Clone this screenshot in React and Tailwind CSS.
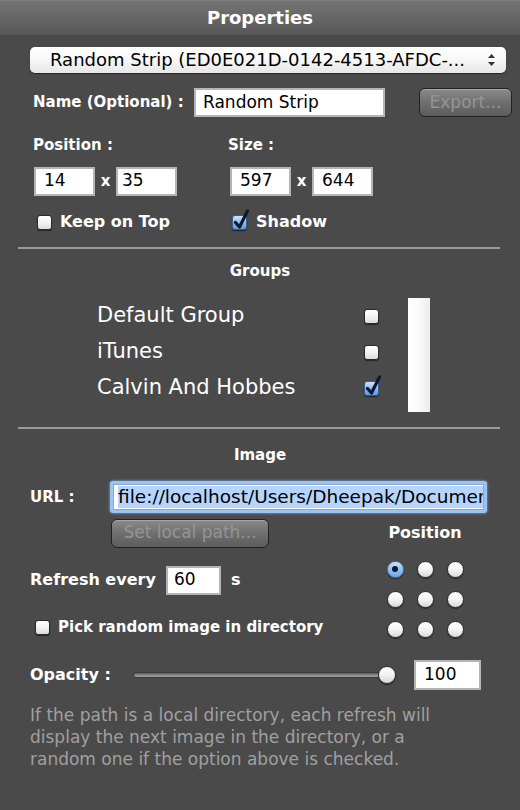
import React from "react";

const F = { fontFamily: '"DejaVu Sans", "Liberation Sans", sans-serif' };

function Check({ checked }) {
  if (checked) {
    return (
      <span className="relative inline-block w-[15px] h-[15px]">
        <span className="absolute inset-0 rounded-[3px] bg-gradient-to-b from-[#cfe3fb] via-[#8fbcf0] to-[#5d9ae0] shadow-[0_1px_1px_rgba(0,0,0,0.6)] border border-[#3a5f8f]" />
        <svg className="absolute left-[1px] top-[-6px]" width="17" height="21" viewBox="0 0 17 21">
          <path d="M2.5 13.5 L6.5 18 L14.5 2" fill="none" stroke="#0b1a33" strokeWidth="3.2" strokeLinecap="round" strokeLinejoin="round" />
        </svg>
      </span>
    );
  }
  return (
    <span className="inline-block w-[15px] h-[15px] rounded-[3px] bg-gradient-to-b from-[#ffffff] via-[#f2f2f2] to-[#dcdcdc] border border-[#2a2a2a] shadow-[0_1px_1px_rgba(0,0,0,0.5)]" />
  );
}

function Radio({ on }) {
  if (on) {
    return (
      <span className="w-[17px] h-[17px] rounded-full bg-gradient-to-b from-[#cfe5fb] via-[#8fc0f0] to-[#6aa8e6] border border-[#4d7db5] shadow-[0_1px_1px_rgba(0,0,0,0.5)] flex items-center justify-center">
        <span className="w-[6px] h-[6px] rounded-full bg-[#0d1a2e]" />
      </span>
    );
  }
  return (
    <span className="w-[17px] h-[17px] rounded-full bg-gradient-to-b from-[#ffffff] via-[#f4f4f4] to-[#d9d9d9] border border-[#333] shadow-[0_1px_1px_rgba(0,0,0,0.5)]" />
  );
}

function Field({ w, children, cls = "" }) {
  return (
    <div className={`h-[29px] bg-white border-2 border-[#b5b5b5] flex items-center text-[17px] text-black ${w} ${cls}`}>
      {children}
    </div>
  );
}

function GrayButton({ w, children }) {
  return (
    <div className={`h-[29px] ${w} rounded-[6px] border border-[#222] bg-gradient-to-b from-[#8a8a8a] via-[#6f6f6f] to-[#5c5c5c] shadow-[inset_0_1px_0_rgba(255,255,255,0.25)] flex items-center justify-center text-[17px] text-[#959595] whitespace-nowrap`}>
      {children}
    </div>
  );
}

export default function App() {
  const bold = "font-bold text-white text-[15px] whitespace-nowrap";
  return (
    <div className="w-[520px] h-[810px] bg-[#4a4a4a] overflow-hidden" style={F}>
      {/* title */}
      <div className="h-[35px] bg-gradient-to-b from-[#747474] to-[#585858] border-t border-[#7c7c7c] flex items-center justify-center">
        <span className="text-white font-bold text-[18px] leading-none">Properties</span>
      </div>

      {/* popup */}
      <div className="mt-[12px] ml-[30px] w-[476px] h-[26px] rounded-[5px] bg-gradient-to-b from-[#ffffff] via-[#f7f7f7] to-[#e6e6e6] shadow-[0_1px_1px_rgba(0,0,0,0.5)] flex items-center pl-[20px] pr-[10px]">
        <span className="flex-1 text-[18px] leading-[24px] text-black whitespace-nowrap">Random Strip (ED0E021D-0142-4513-AFDC-...</span>
        <svg width="9" height="14" viewBox="0 0 9 14">
          <path d="M1 5 L4.5 1 L8 5 Z" fill="#333" />
          <path d="M1 9 L4.5 13 L8 9 Z" fill="#333" />
        </svg>
      </div>

      {/* name row */}
      <div className="mt-[14px] h-[31px] flex items-center">
        <span className={`${bold} ml-[33px] w-[161px]`}>Name (Optional) :</span>
        <Field w="w-[191px]"><span className="pl-[7px]">Random Strip</span></Field>
        <div className="ml-[34px]"><GrayButton w="w-[93px]">Export...</GrayButton></div>
      </div>

      {/* labels */}
      <div className="mt-[16px] h-[22px] flex items-center">
        <span className={`${bold} ml-[33px] w-[195px]`}>Position :</span>
        <span className={bold}>Size :</span>
      </div>

      {/* inputs */}
      <div className="mt-[10px] h-[30px] flex items-center">
        <div className="ml-[34px]"><Field w="w-[61px]"><span className="pl-[8px]">14</span></Field></div>
        <span className="w-[21px] text-center text-white font-bold text-[15px]">x</span>
        <Field w="w-[61px]"><span className="pl-[4px]">35</span></Field>
        <div className="ml-[53px]"><Field w="w-[61px]"><span className="pl-[8px]">597</span></Field></div>
        <span className="w-[21px] text-center text-white font-bold text-[15px]">x</span>
        <Field w="w-[61px]"><span className="pl-[8px]">644</span></Field>
      </div>

      {/* checkboxes */}
      <div className="mt-[14px] h-[24px] flex items-center">
        <div className="ml-[37px] flex items-center w-[195px]">
          <Check />
          <span className={`${bold} ml-[8px] text-[16px]`}>Keep on Top</span>
        </div>
        <div className="flex items-center">
          <Check checked />
          <span className={`${bold} ml-[9px] text-[16px]`}>Shadow</span>
        </div>
      </div>

      <div className="mt-[13px] ml-[18px] w-[482px] h-[2px] bg-[#9a9a9a]" />

      {/* Groups */}
      <div className="mt-[12px] h-[20px] flex items-center justify-center">
        <span className={bold}>Groups</span>
      </div>
      <div className="mt-[17px] h-[114px] flex">
        <div className="ml-[97px] w-[267px] flex flex-col">
          {["Default Group", "iTunes", "Calvin And Hobbes"].map((g) => (
            <div key={g} className="h-[36px] flex items-center text-white text-[21px] whitespace-nowrap">{g}</div>
          ))}
        </div>
        <div className="w-[44px] flex flex-col">
          {[false, false, true].map((c, i) => (
            <div key={i} className="h-[36px] flex items-center"><Check checked={c} /></div>
          ))}
        </div>
        <div className="w-[22px] h-[114px] bg-gradient-to-r from-[#ffffff] via-[#fafafa] to-[#ececec]" />
      </div>

      <div className="mt-[15px] ml-[18px] w-[482px] h-[2px] bg-[#9a9a9a]" />

      {/* Image */}
      <div className="mt-[16px] h-[20px] flex items-center justify-center">
        <span className={bold}>Image</span>
      </div>

      <div className="mt-[16px] h-[32px] flex items-center">
        <span className={`${bold} ml-[30px] w-[80px]`}>URL :</span>
        <div className="w-[377px] h-[32px] rounded-[3px] bg-[#9cc4f2] p-[3px] shadow-[0_0_3px_#7fb2f0]">
          <div className="h-full bg-white border border-[#8aa9d0] flex items-center pl-[4px] overflow-hidden">
            <span className="bg-[#b5d5ff] text-black text-[18.5px] whitespace-nowrap leading-[22px]">file://localhost/Users/Dheepak/Documents/Comics</span>
          </div>
        </div>
      </div>

      <div className="mt-[6px] h-[28px] flex items-center">
        <div className="ml-[111px]"><GrayButton w="w-[158px]">Set local path...</GrayButton></div>
        <span className={`${bold} ml-[111px] w-[90px] text-center text-[16px]`}>Position</span>
      </div>

      {/* refresh + radios */}
      <div className="mt-[7px] h-[90px] flex">
        <div className="w-[380px] flex flex-col">
          <div className="mt-[11px] h-[30px] flex items-center">
            <span className={`${bold} ml-[30px] w-[136px] text-[16px]`}>Refresh every</span>
            <Field w="w-[55px]"><span className="pl-[6px]">60</span></Field>
            <span className={`${bold} ml-[10px] text-[16px]`}>s</span>
          </div>
          <div className="mt-[20px] h-[24px] flex items-center">
            <span className="ml-[35px] flex"><Check /></span>
            <span className={`${bold} ml-[8px] text-[15.5px]`}>Pick random image in directory</span>
          </div>
        </div>
        <div className="w-[90px] grid grid-cols-3">
          {[true, false, false, false, false, false, false, false, false].map((on, i) => (
            <div key={i} className="h-[30px] flex items-center justify-center"><Radio on={on} /></div>
          ))}
        </div>
      </div>

      {/* opacity */}
      <div className="mt-[16px] h-[30px] flex items-center">
        <span className={`${bold} ml-[30px] w-[103px] text-[16px]`}>Opacity :</span>
        <div className="relative w-[265px] h-[20px] flex items-center">
          <div className="w-[257px] h-[6px] rounded-full bg-gradient-to-b from-[#5a5a5a] via-[#8a8a8a] to-[#a0a0a0] border border-[#3a3a3a]" />
          <span className="absolute left-[245px] top-[1px] w-[18px] h-[18px] rounded-full bg-gradient-to-b from-[#ffffff] via-[#f2f2f2] to-[#d6d6d6] border border-[#333] shadow-[0_1px_1px_rgba(0,0,0,0.5)]" />
        </div>
        <div className="ml-[16px]"><Field w="w-[67px]" cls="h-[30px]"><span className="pl-[8px]">100</span></Field></div>
      </div>

      {/* help */}
      <div className="mt-[14px] ml-[30px] w-[420px] text-[17px] leading-[22px] text-[#a0a0a0]">
        If the path is a local directory, each refresh will display the next image in the directory, or a random one if the option above is checked.
      </div>
    </div>
  );
}
